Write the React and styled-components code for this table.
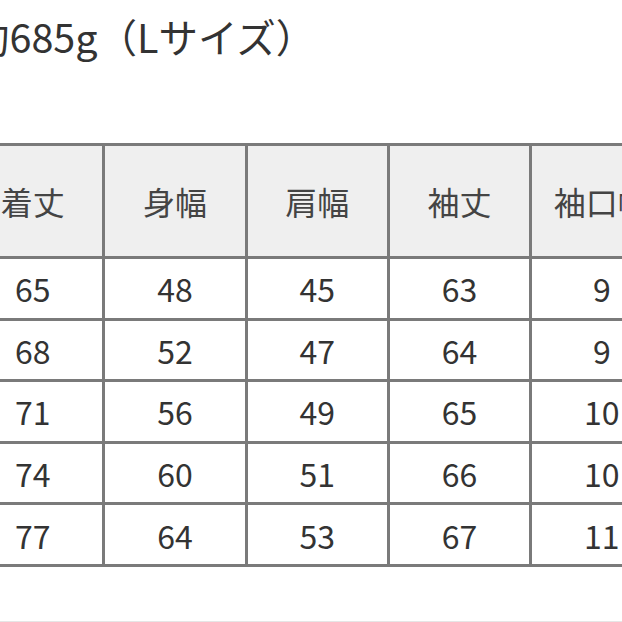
import React from "react";
import styled, { createGlobalStyle } from "styled-components";

const GlobalStyle = createGlobalStyle`
  html, body {
    margin: 0;
    padding: 0;
    background: #fff;
    overflow: hidden;
  }
  body {
    font-family: "Noto Sans CJK JP", "Noto Sans", sans-serif;
    color: #333;
  }
`;

const Page = styled.div`
  width: 622px;
  height: 622px;
  box-sizing: border-box;
  border-bottom: 1px solid #e6e6e6;
  overflow: hidden;
`;

const Weight = styled.p`
  margin: 0 0 0 -30px;
  padding-top: 8px;
  font-size: 39.5px;
  line-height: 56px;
  white-space: nowrap;
  color: #333;
`;

const SizeTable = styled.table`
  margin: 79px 0 0 -40px;
  border-collapse: collapse;
  table-layout: fixed;
`;

const HeadCell = styled.th`
  width: 139.3px;
  min-width: 139.3px;
  height: 110px;
  padding: 0;
  border: 3px solid #7a7a7a;
  background: #efefef;
  font-weight: 400;
  font-size: 32px;
  color: #444;
  text-align: center;
  white-space: nowrap;
  overflow: hidden;
`;

const Cell = styled.td`
  height: 58.6px;
  padding: 0;
  border: 3px solid #7a7a7a;
  font-size: 32px;
  color: #333;
  text-align: center;
  white-space: nowrap;
`;

const headers = ["着丈", "身幅", "肩幅", "袖丈", "袖口幅"];

const rows = [
  [65, 48, 45, 63, 9],
  [68, 52, 47, 64, 9],
  [71, 56, 49, 65, 10],
  [74, 60, 51, 66, 10],
  [77, 64, 53, 67, 11],
];

export default function App() {
  return (
    <Page>
      <GlobalStyle />
      <Weight>約685g（Lサイズ）</Weight>
      <SizeTable>
        <thead>
          <tr>
            {headers.map((h) => (
              <HeadCell key={h}>{h}</HeadCell>
            ))}
          </tr>
        </thead>
        <tbody>
          {rows.map((r, i) => (
            <tr key={i}>
              {r.map((v, j) => (
                <Cell key={j}>{v}</Cell>
              ))}
            </tr>
          ))}
        </tbody>
      </SizeTable>
    </Page>
  );
}
